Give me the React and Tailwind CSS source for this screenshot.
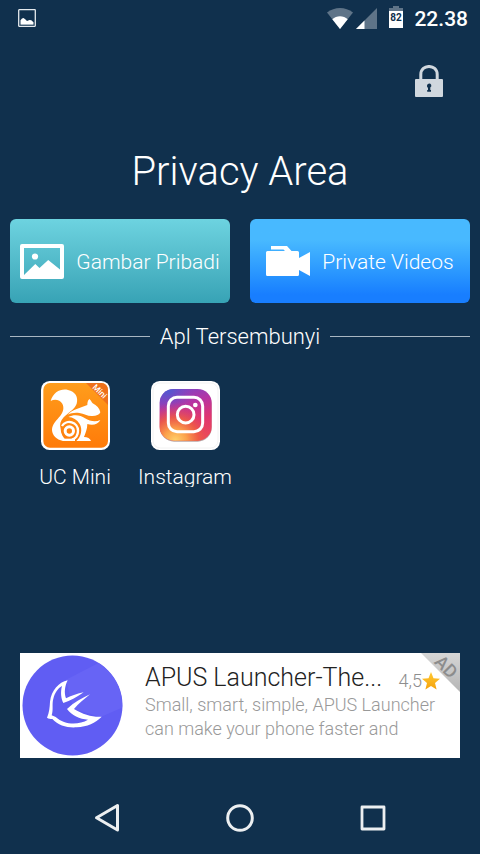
import React from 'react';

const PictureNotification = () => (
  <svg viewBox="0 0 18 18" className="w-[18px] h-[18px]" aria-hidden="true">
    <rect x="0.7" y="0.7" width="16.6" height="16.6" rx="0.5" fill="none" stroke="#e4e9ed" strokeWidth="1.3" />
    <path d="M2.5 15V11.2L4 9.6 5.5 9 7.5 10.6 9 12 11.5 10.9 13.3 11.2 15.5 13.2V15Z" fill="#fff" />
    <path d="M2.5 15.5H15.5" stroke="#a9b6c2" strokeWidth="1" />
  </svg>
);

const WifiIcon = () => (
  <svg viewBox="0 0 26 21" className="w-[26px] h-[21px]" aria-hidden="true">
    <path d="M13 21 0 4.500C7.500-1.500 18.500-1.500 26 4.500Z" fill="#5f7488" />
    <path d="M13 21 5.300 11.200C9.500 7.200 16.500 7.200 20.700 11.200Z" fill="#fff" />
  </svg>
);

const SignalIcon = () => (
  <svg viewBox="0 0 21 21" className="w-[21px] h-[21px]" aria-hidden="true">
    <path d="M0 21 21 0V21Z" fill="#5f7488" />
    <path d="M0 21 8.500 12.500V21Z" fill="#fff" />
  </svg>
);

const BatteryIcon = () => (
  <svg viewBox="0 0 14 22" className="w-[14px] h-[22px]" aria-hidden="true">
    <path d="M4 0H10V2H14V5H0V2H4Z" fill="#5f7488" />
    <path d="M0 5H14V22H0Z" fill="#fff" />
    <text x="7" y="15" textAnchor="middle" fontFamily="Roboto, sans-serif" fontSize="10" fontWeight="700" fill="#10304d">
      82
    </text>
  </svg>
);

const LockIcon = () => (
  <svg viewBox="0 0 28 32" className="w-[28px] h-[32px]" aria-hidden="true">
    <path d="M5.800 15V9.500C5.800 -1.200 22.200 -1.200 22.200 9.500V15" fill="none" stroke="#d0d7de" strokeWidth="3" />
    <rect y="14" width="28" height="18" rx="1" fill="#d0d7de" />
    <path d="M12 21.200a2.200 2.200 0 1 1 3.300 1.400V25H16v1.800H12.200V25H13v-2.200a2 2 0 0 1-1-1.600Z" fill="#10304d" />
  </svg>
);

const ImageIcon = () => (
  <svg viewBox="0 0 44 35" className="w-[44px] h-[35px] shrink-0" aria-hidden="true">
    <path
      fillRule="evenodd"
      d="M2 0H42a2 2 0 0 1 2 2V33a2 2 0 0 1-2 2H2a2 2 0 0 1-2-2V2a2 2 0 0 1 2-2ZM4 4V31L15.300 20 19.500 24 28.200 16 40 25.500V4Z"
      fill="#fff"
    />
    <circle cx="15" cy="12.500" r="3.100" fill="#fff" />
  </svg>
);

const VideoIcon = () => (
  <svg viewBox="0 0 44 30" className="w-[44px] h-[30px] shrink-0" aria-hidden="true">
    <path
      d="M5 0H21L25.500 5H31.500a1.500 1.500 0 0 1 1.500 1.500V12L44 6V30L33 24V28.500a1.500 1.500 0 0 1-1.500 1.500H1.500A1.500 1.500 0 0 1 0 28.500V6.500A1.500 1.500 0 0 1 1.500 5H19L17.500 3.500H5Z"
      fill="#fff"
    />
  </svg>
);

const UcMiniLogo = () => (
  <svg viewBox="30 33 207 207" className="w-[69px] h-[69px]" aria-hidden="true">
    <defs>
      <linearGradient id="uc" x1="0" y1="0" x2="0" y2="1">
        <stop offset="0" stopColor="#ff9d1c" />
        <stop offset="1" stopColor="#ff7b09" />
      </linearGradient>
      <clipPath id="uc-clip">
        <rect x="37" y="39" width="194" height="194" rx="20" />
      </clipPath>
    </defs>
    <rect x="30" y="33" width="207" height="207" rx="26" fill="#fff" />
    <rect x="37" y="39" width="194" height="194" rx="20" fill="url(#uc)" />
    <g clipPath="url(#uc-clip)">
      <path d="M165 39H231V105Z" fill="#ee701a" />
      <text
        transform="translate(183 53) rotate(45)"
        fontFamily="Roboto, sans-serif"
        fontSize="25"
        fontWeight="500"
        fill="#fff"
      >
        Mini
      </text>
    </g>
    <path
      d="M59 93C67 66 90 55 111 60C132 64 143 81 137 101C131 119 110 128 98 142C88 153 85 163 89 176C89 190 96 203 108 213H96C76 209 64 196 63 180C63 162 78 150 88 137C97 126 100 112 94 101C87 90 72 86 59 93Z"
      fill="#fff"
    />
    <path
      d="M110 134C125 118 148 114 169 105C169 98 170 92 175 87C180 90 181 96 185 100C197 106 206 115 208 127C205 135 196 138 184 138C170 139 160 131 145 129C132 127 121 129 110 134Z"
      fill="#fff"
    />
    <path
      d="M112 141C129 133 148 135 162 145C177 154 194 157 208 150C202 162 186 168 169 162C169 178 163 190 159 201C170 201 177 205 180 213H136C151 200 155 178 146 162C138 149 126 142 112 141Z"
      fill="#fff"
    />
    <path d="M93 168A26 26 0 0 1 141 182C141 195 134 205 123 209" fill="none" stroke="#fff" strokeWidth="7" />
    <circle cx="115" cy="183" r="12.500" fill="none" stroke="#fff" strokeWidth="9" />
    <path d="M96 206H132V213H96Z" fill="#fff" />
  </svg>
);

const InstagramLogo = () => (
  <svg viewBox="60 33 207 207" className="w-[69px] h-[69px]" aria-hidden="true">
    <defs>
      <linearGradient id="ig" x1="0.35" y1="0" x2="0.65" y2="1">
        <stop offset="0" stopColor="#7f45c4" />
        <stop offset="0.3" stopColor="#b534a4" />
        <stop offset="0.65" stopColor="#e03570" />
        <stop offset="1" stopColor="#ec4a58" />
      </linearGradient>
      <radialGradient id="ig-warm" cx="0.3" cy="1" r="0.75">
        <stop offset="0" stopColor="#ffd16b" />
        <stop offset="0.3" stopColor="#fba04b" />
        <stop offset="0.6" stopColor="#f0603f" stopOpacity="0.8" />
        <stop offset="1" stopColor="#e03570" stopOpacity="0" />
      </radialGradient>
      <radialGradient id="ig-cool" cx="0.15" cy="0" r="0.5">
        <stop offset="0" stopColor="#4a5bd2" />
        <stop offset="1" stopColor="#7f45c4" stopOpacity="0" />
      </radialGradient>
    </defs>
    <rect x="60" y="33" width="207" height="207" rx="26" fill="#fff" />
    <rect x="66" y="39" width="195" height="195" rx="22" fill="none" stroke="#ececec" strokeWidth="2" />
    <rect x="87" y="60" width="155" height="155" rx="42" fill="#b9a7a7" />
    <rect x="86" y="57" width="156" height="155" rx="42" fill="url(#ig)" />
    <rect x="86" y="57" width="156" height="155" rx="42" fill="url(#ig-cool)" />
    <rect x="86" y="57" width="156" height="155" rx="42" fill="url(#ig-warm)" />
    <rect x="112" y="82" width="103" height="103" rx="26" fill="none" stroke="#fff" strokeWidth="9" />
    <circle cx="164" cy="134" r="25" fill="none" stroke="#fff" strokeWidth="9" />
    <circle cx="193" cy="105" r="7" fill="#fff" />
  </svg>
);

const ApusLogo = () => (
  <svg viewBox="36 44 303 303" className="w-[101px] h-[101px] shrink-0" aria-hidden="true">
    <defs>
      <clipPath id="apus-clip">
        <circle cx="187.500" cy="195.500" r="149" />
      </clipPath>
    </defs>
    <circle cx="187.500" cy="195.500" r="150" fill="#605df3" />
    <path d="M168 118 270 66 345 90V198L272 230 190 205Z" fill="#6764f5" clipPath="url(#apus-clip)" />
    <path
      fillRule="evenodd"
      d="M173 120C146 126 124 150 120 184C119 202 118 216 111 232C116 236 121 235 127 236C145 256 172 263 200 261C232 259 256 248 275 229C249 231 219 223 192 206C205 190 224 176 240 162C216 173 192 186 171 206C185 225 209 237 234 238C205 255 164 254 137 230C132 228 128 227 125 225C131 207 125 192 130 175C134 157 144 144 156 137C151 156 153 174 160 188C181 181 202 170 221 156C202 160 186 166 168 174C162 158 164 138 173 120Z"
      fill="#fff"
    />
  </svg>
);

const StarIcon = () => (
  <svg viewBox="0 0 18 18" className="w-[18px] h-[18px]" aria-hidden="true">
    <defs>
      <linearGradient id="star" x1="0" y1="0" x2="0" y2="1">
        <stop offset="0" stopColor="#ffc933" />
        <stop offset="1" stopColor="#f5a20c" />
      </linearGradient>
    </defs>
    <path d="M9 0 11.500 6.200 18 6.800 13 11 14.600 17.600 9 14.100 3.400 17.600 5 11 0 6.800 6.500 6.200Z" fill="url(#star)" />
  </svg>
);

const AdCorner = () => (
  <svg viewBox="0 0 39 39" className="absolute top-0 right-0 w-[39px] h-[39px]" role="img" aria-label="Ad">
    <defs>
      <linearGradient id="ad" x1="0" y1="0" x2="0" y2="1">
        <stop offset="0" stopColor="#d6d6d6" />
        <stop offset="1" stopColor="#b5b5b5" />
      </linearGradient>
    </defs>
    <path d="M0 0H39V39Z" fill="url(#ad)" />
    <text
      transform="translate(25 14) rotate(45)"
      y="6"
      textAnchor="middle"
      fontFamily="Roboto, sans-serif"
      fontSize="18"
      fontWeight="500"
      fill="#8c8c8c"
    >
      AD
    </text>
  </svg>
);

const apps = [
  { name: 'UC Mini', Logo: UcMiniLogo },
  { name: 'Instagram', Logo: InstagramLogo },
];

const StatusBar = () => (
  <header className="flex items-center justify-between h-9 pl-[18px] pr-3">
    <PictureNotification />
    <div className="flex items-center">
      <div className="flex gap-[3px] mr-3">
        <WifiIcon />
        <SignalIcon />
      </div>
      <div className="pb-0.5 mr-[11px]">
        <BatteryIcon />
      </div>
      <span className="pt-0.5 text-[21px] leading-6 font-medium">22.38</span>
    </div>
  </header>
);

const AdBanner = () => (
  <a href="#apus" className="relative flex items-start mx-5 h-[105px] bg-white pl-0.5 pt-0.5">
    <ApusLogo />
    <div className="flex-1 min-w-0 pl-[22px] pr-5">
      <div className="flex items-center justify-between pt-2">
        <h2 className="text-[25px] leading-[30px] font-light text-[#222] truncate">APUS Launcher-The...</h2>
        <span className="flex items-center pt-1.5 text-[18px] leading-5 font-light text-[#8e8e8e]">
          4,5
          <StarIcon />
        </span>
      </div>
      <p className="text-[18px] leading-6 font-light text-[#999]">
        Small, smart, simple, APUS Launcher
        <br />
        can make your phone faster and
      </p>
    </div>
    <AdCorner />
  </a>
);

const NavBar = () => (
  <nav className="grid grid-cols-3 items-center justify-items-center h-[72px] mt-6 px-10">
    <button aria-label="Back">
      <svg viewBox="0 0 26 30" className="w-[26px] h-[30px]" fill="none" stroke="#eceff1" strokeWidth="3" strokeLinejoin="round">
        <path d="M23.500 2.500V27L2.500 14.700Z" />
      </svg>
    </button>
    <button aria-label="Home">
      <svg viewBox="0 0 28 28" className="w-7 h-7" fill="none" stroke="#eceff1" strokeWidth="3">
        <circle cx="14" cy="14" r="12.300" />
      </svg>
    </button>
    <button aria-label="Recent apps">
      <svg viewBox="0 0 26 26" className="w-[26px] h-[26px]" fill="none" stroke="#eceff1" strokeWidth="2.800" strokeLinejoin="round">
        <rect x="2" y="2" width="22" height="22" />
      </svg>
    </button>
  </nav>
);

export default function App() {
  return (
    <div className="min-h-screen flex flex-col bg-[#10304d] text-white font-[Roboto,sans-serif]">
      <StatusBar />

      <main className="flex-1 flex flex-col">
        <div className="flex justify-end pt-[29px] pr-[37px]">
          <button aria-label="Lock">
            <LockIcon />
          </button>
        </div>

        <h1 className="mt-[51px] text-center text-[40px] leading-[48px] font-light">Privacy Area</h1>

        <div className="grid grid-cols-2 gap-5 mt-[23px] px-2.5">
          <button className="flex items-center justify-center gap-3 h-[84px] rounded-md bg-linear-to-b from-[#6dd3e0] to-[#37a3b5]">
            <ImageIcon />
            <span className="pt-0.5 text-[21px] leading-6 font-light whitespace-nowrap">Gambar Pribadi</span>
          </button>
          <button className="flex items-center justify-center gap-3 h-[84px] rounded-md bg-linear-to-b from-[#48b9ff] from-25% to-[#187eff] to-90%">
            <VideoIcon />
            <span className="pt-0.5 text-[21px] leading-6 font-light whitespace-nowrap">Private Videos</span>
          </button>
        </div>

        <div className="flex items-center gap-2.5 mt-[19px] px-2.5">
          <span className="flex-1 h-px bg-[#a9b6c2]" />
          <h2 className="pt-0.5 text-[22px] leading-[26px] font-light">Apl Tersembunyi</h2>
          <span className="flex-1 h-px bg-[#a9b6c2]" />
        </div>

        <ul className="grid grid-cols-4 mt-[31px] px-5">
          {apps.map(({ name, Logo }) => (
            <li key={name}>
              <button className="w-full flex flex-col items-center">
                <Logo />
                <span className="mt-[15px] h-[22px] overflow-hidden text-[21px] leading-6 font-light">{name}</span>
              </button>
            </li>
          ))}
        </ul>

        <div className="mt-auto">
          <AdBanner />
        </div>
      </main>

      <NavBar />
    </div>
  );
}
